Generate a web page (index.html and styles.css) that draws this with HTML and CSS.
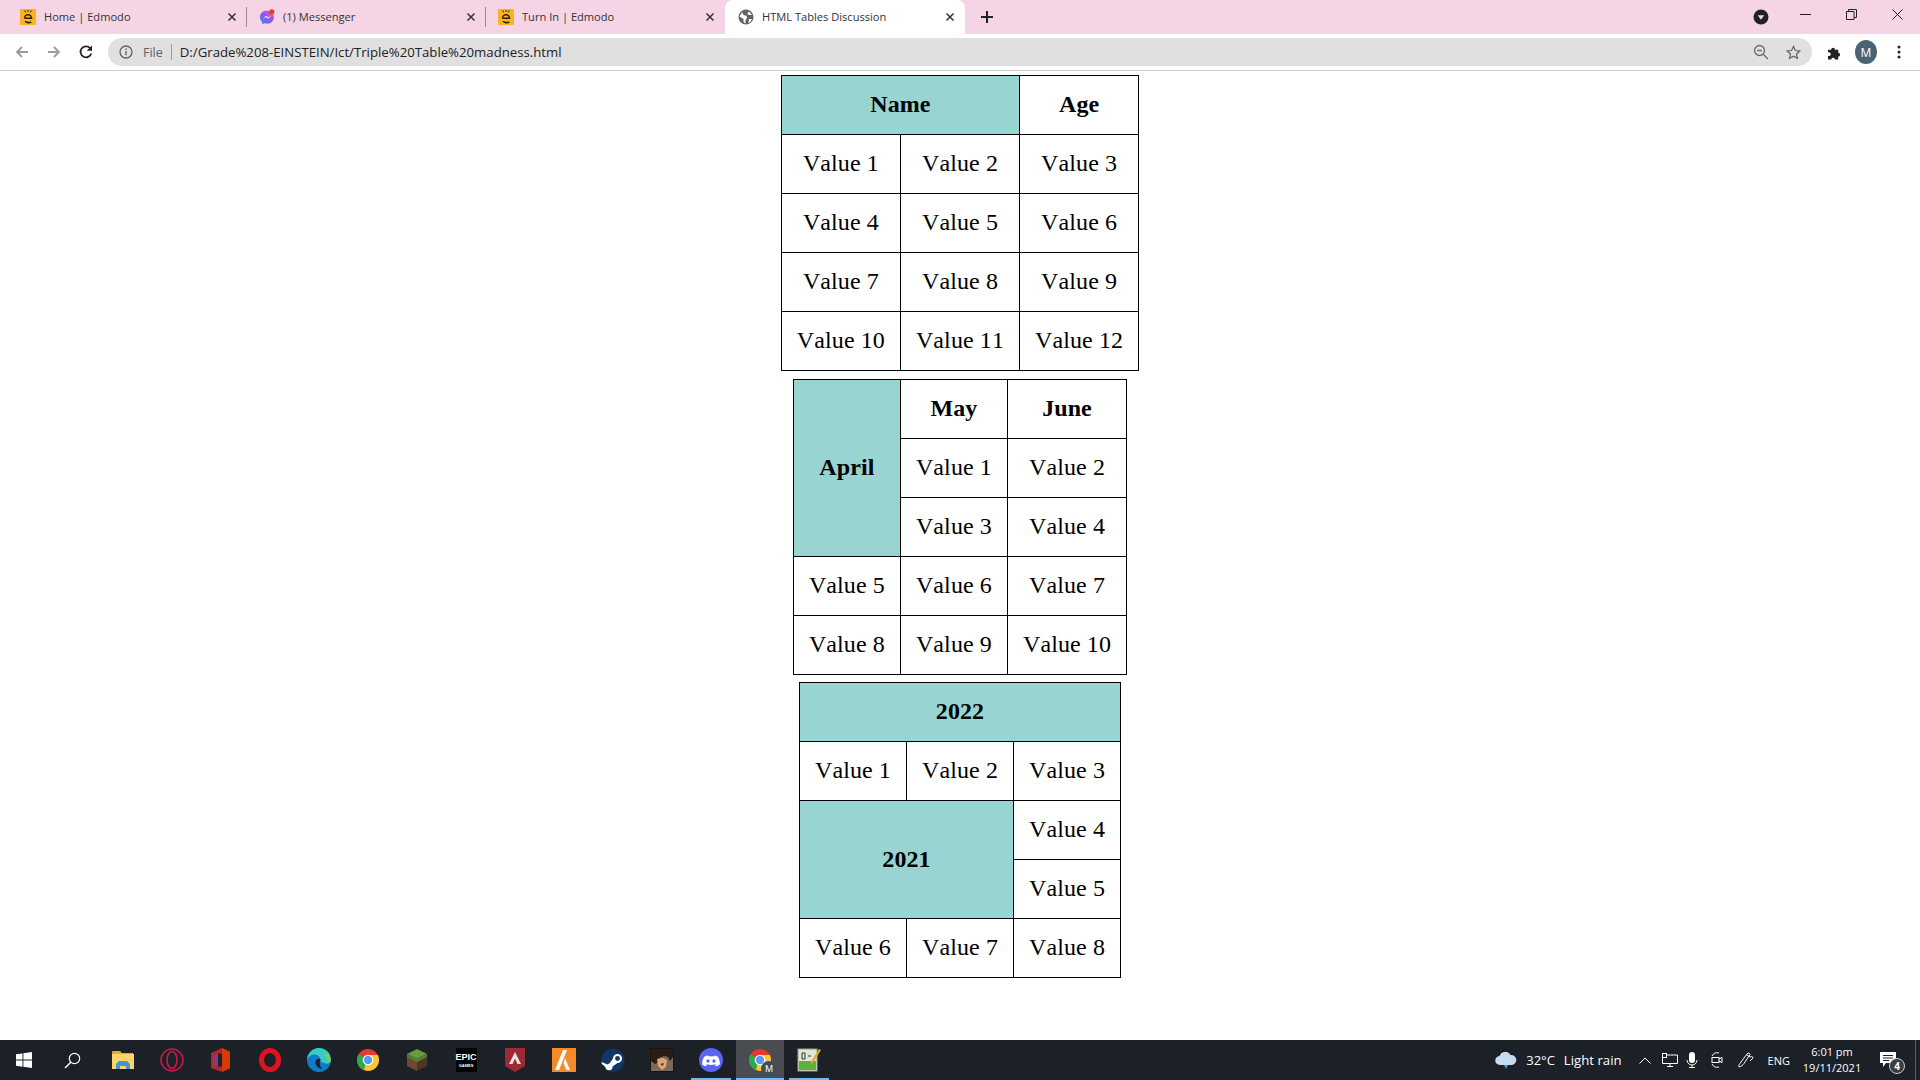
FILE: index.html
```html
<!DOCTYPE html>
<html lang="en">

<head>
    <meta charset="UTF-8">
    <meta name="viewport" content="width=device-width, initial-scale=1.0">
    <title>HTML Tables Discussion</title>
    <link rel="stylesheet" href="styles.css">
</head>

<body>

    <svg class="defs" width="0" height="0">
        <symbol id="edmodo" viewBox="0 0 16 16">
            <rect width="16" height="16" rx="1" fill="#fbb41a"/>
            <path d="M4.700 1.500l.9 1.700M8 .9v2.200M11.300 1.500l-.9 1.700" stroke="#3a3020" stroke-width="1.100" fill="none"/>
            <path d="M4.500 9.300a3.500 3.500 0 1 1 7 0H4.500M11.200 12.900c-1.700 1.200-5 1-6-.9" stroke="#2c2618" stroke-width="1.600" fill="none"/>
        </symbol>
        <symbol id="close" viewBox="0 0 10 10">
            <path d="M1.500 1.500l7 7M8.500 1.500l-7 7" stroke="#333" stroke-width="1.500" fill="none"/>
        </symbol>
        <symbol id="chrome-logo" viewBox="0 0 24 24">
            <circle cx="12" cy="12" r="11" fill="#e33b2e"/>
            <path d="M12 12L2.500 6.500A11 11 0 0 0 8 22.300z" fill="#2da94f"/>
            <path d="M12 7h9.800A11 11 0 0 1 12 23l-4-1z" fill="#fcc934"/>
            <circle cx="12" cy="12" r="5.300" fill="#fff"/>
            <circle cx="12" cy="12" r="4.200" fill="#5e97f6"/>
        </symbol>
    </svg>

    <header class="tab-strip">
        <div class="tab">
            <svg class="favicon"><use href="#edmodo"/></svg>
            <span class="tab-title">Home | Edmodo</span>
            <svg class="tab-close"><use href="#close"/></svg>
        </div>
        <div class="tab with-sep">
            <svg class="favicon" viewBox="0 0 16 16">
                <defs>
                    <linearGradient id="msgr" x1="0" y1="1" x2="1" y2="0">
                        <stop offset="0" stop-color="#2f8cf5"/>
                        <stop offset="0.5" stop-color="#8f55f2"/>
                        <stop offset="1" stop-color="#f76a8c"/>
                    </linearGradient>
                </defs>
                <path d="M8 1.500C4 1.500 1 4.400 1 8.200c0 2 .8 3.700 2.200 4.900V15.500l2.200-1.200c.8.300 1.700.4 2.600.4 4 0 7-2.900 7-6.500S12 1.500 8 1.500z" fill="url(#msgr)"/>
                <path d="M4 10l3-3.300 2 1.700 3-1.900-3 3.300-2-1.700z" fill="#fff"/>
                <circle cx="12.800" cy="2.800" r="2.600" fill="#f0392f"/>
            </svg>
            <span class="tab-title">(1) Messenger</span>
            <svg class="tab-close"><use href="#close"/></svg>
        </div>
        <div class="tab with-sep">
            <svg class="favicon"><use href="#edmodo"/></svg>
            <span class="tab-title">Turn In | Edmodo</span>
            <svg class="tab-close"><use href="#close"/></svg>
        </div>
        <div class="tab active">
            <svg class="favicon" viewBox="0 0 16 16">
                <circle cx="8" cy="8" r="7.500" fill="#5f6368"/>
                <path d="M5 1.500L4.200 4 6 6.200l2.500.6L9 9l-1.500 2v3.500l-2-1.500V10L1.500 7.500zM11 2.500l-1.500 1.700 1 1.800H14zM11 10h3l-2 3.500-1.500.5z" fill="#fff"/>
            </svg>
            <span class="tab-title">HTML Tables Discussion</span>
            <svg class="tab-close"><use href="#close"/></svg>
        </div>
        <svg class="new-tab" width="14" height="14" viewBox="0 0 14 14">
            <path d="M7 1v12M1 7h12" stroke="#222" stroke-width="2" fill="none"/>
        </svg>
        <div class="strip-right">
            <svg class="tab-search" width="16" height="16" viewBox="0 0 16 16">
                <circle cx="8" cy="8" r="7.500" fill="#202124"/>
                <path d="M4.800 6.300h6.400L8 10.800z" fill="#f5d5e5"/>
            </svg>
            <svg class="win-btn win-min" width="11" height="11" viewBox="0 0 11 11">
                <path d="M0 5.500h11" stroke="#222" fill="none"/>
            </svg>
            <svg class="win-btn win-restore" width="11" height="11" viewBox="0 0 11 11">
                <path d="M.5 2.500h7.500v8H.5zM2.500 2.500V.5h8v8H8" stroke="#222" fill="none"/>
            </svg>
            <svg class="win-btn win-close" width="11" height="11" viewBox="0 0 11 11">
                <path d="M.5.500l10 10M10.500.500l-10 10" stroke="#222" fill="none"/>
            </svg>
        </div>
    </header>

    <nav class="toolbar">
        <svg class="nav-icon" viewBox="0 0 16 16">
            <path d="M14 8H3M8 3L3 8l5 5" stroke="#9a9b9d" stroke-width="1.800" fill="none"/>
        </svg>
        <svg class="nav-icon" viewBox="0 0 16 16">
            <path d="M2 8h11M8 3l5 5-5 5" stroke="#9a9b9d" stroke-width="1.800" fill="none"/>
        </svg>
        <svg class="nav-icon" viewBox="0 0 16 16">
            <path d="M13.300 9.500A5.500 5.500 0 1 1 12 4" stroke="#222" stroke-width="1.800" fill="none"/>
            <path d="M14 1.500v5.200H8.800z" fill="#222"/>
        </svg>
        <div class="omnibox">
            <svg class="info-icon" width="14" height="14" viewBox="0 0 14 14">
                <circle cx="7" cy="7" r="6" stroke="#5f6368" stroke-width="1.300" fill="none"/>
                <path d="M7 6v4.200M7 3.500v1.400" stroke="#5f6368" stroke-width="1.400" fill="none"/>
            </svg>
            <span class="scheme">File</span>
            <span class="url-sep"></span>
            <span class="url">D:/Grade%208-EINSTEIN/Ict/Triple%20Table%20madness.html</span>
            <svg class="zoom-icon" width="16" height="16" viewBox="0 0 16 16">
                <circle cx="6.500" cy="6.500" r="5" stroke="#6a6b6d" stroke-width="1.300" fill="none"/>
                <path d="M4.200 6.500h4.600M10.200 10.200L15 15" stroke="#6a6b6d" stroke-width="1.300" fill="none"/>
            </svg>
            <svg class="star-icon" width="15" height="15" viewBox="0 0 16 16">
                <path d="M8 1.500l2 4.400 4.700.5-3.500 3.200 1 4.700L8 12l-4.200 2.300 1-4.700-3.500-3.200 4.700-.5z" stroke="#5f6368" stroke-width="1.300" fill="none"/>
            </svg>
        </div>
        <svg class="puzzle" width="15" height="15" viewBox="0 0 16 16">
            <path d="M1 5h3.500a2 2 0 1 1 4 0H12v3.300a2 2 0 1 1 0 4V15.500H8.500a2 2 0 1 0-4 0H1v-4a2 2 0 1 0 0-3.500z" fill="#222"/>
        </svg>
        <span class="avatar">M</span>
        <svg class="kebab" width="4" height="14" viewBox="0 0 4 14">
            <circle cx="2" cy="2" r="1.500" fill="#222"/>
            <circle cx="2" cy="7" r="1.500" fill="#222"/>
            <circle cx="2" cy="12" r="1.500" fill="#222"/>
        </svg>
    </nav>

    <main class="page">
        <table>
            <tr>
                <th colspan="2" class="teal">Name</th>
                <th>Age</th>
            </tr>
            <tr><td>Value 1</td><td>Value 2</td><td>Value 3</td></tr>
            <tr><td>Value 4</td><td>Value 5</td><td>Value 6</td></tr>
            <tr><td>Value 7</td><td>Value 8</td><td>Value 9</td></tr>
            <tr><td>Value 10</td><td>Value 11</td><td>Value 12</td></tr>
        </table>

        <table>
            <tr>
                <th rowspan="3" class="teal">April</th>
                <th>May</th>
                <th>June</th>
            </tr>
            <tr><td>Value 1</td><td>Value 2</td></tr>
            <tr><td>Value 3</td><td>Value 4</td></tr>
            <tr><td>Value 5</td><td>Value 6</td><td>Value 7</td></tr>
            <tr><td>Value 8</td><td>Value 9</td><td>Value 10</td></tr>
        </table>

        <table class="last-table">
            <tr><th colspan="3" class="teal">2022</th></tr>
            <tr><td>Value 1</td><td>Value 2</td><td>Value 3</td></tr>
            <tr>
                <th colspan="2" rowspan="2" class="teal">2021</th>
                <td>Value 4</td>
            </tr>
            <tr><td>Value 5</td></tr>
            <tr><td>Value 6</td><td>Value 7</td><td>Value 8</td></tr>
        </table>
    </main>

    <footer class="taskbar">
        <div class="slot start">
            <svg width="16" height="16" viewBox="0 0 16 16">
                <path d="M0 2.300l6.500-.9v6.200H0zM7.400 1.300L16 0v7.600H7.400zM0 8.500h6.500v6.200L0 13.800zM7.400 8.500H16V16l-8.600-1.200z" fill="#fff"/>
            </svg>
        </div>
        <div class="slot start">
            <svg width="17" height="17" viewBox="0 0 17 17">
                <circle cx="10.500" cy="6.500" r="5.200" stroke="#fff" stroke-width="1.200" fill="none"/>
                <path d="M6.800 10.200L1 16" stroke="#fff" stroke-width="1.500" fill="none"/>
            </svg>
        </div>
        <div class="slot folder-slot">
            <svg width="22" height="20" viewBox="0 0 22 20">
                <path d="M0 2a1 1 0 0 1 1-1h7l2 2h11v3H0z" fill="#e2a92f"/>
                <rect y="4" width="22" height="15" fill="#fbd667"/>
                <path d="M4 19v-5l3-3h8l3 3v5h-4v-3H8v3z" fill="#3d97d8"/>
            </svg>
        </div>
        <div class="slot">
            <svg width="24" height="24" viewBox="0 0 24 24">
                <circle cx="12" cy="12" r="11" stroke="#c9184a" stroke-width="1.600" fill="none"/>
                <ellipse cx="12" cy="12" rx="5" ry="8.500" stroke="#c9184a" stroke-width="1.600" fill="none"/>
            </svg>
        </div>
        <div class="slot">
            <svg width="20" height="24" viewBox="0 0 20 24">
                <path d="M0 5l11-5v24L0 20z" fill="#b3262c"/>
                <path d="M2 7.500l5-2v13l-5-1z" fill="#8c3a77"/>
                <path d="M11 0l8 3.500v17L11 24z" fill="#d83b01"/>
                <path d="M7 5.500h4v13H7z" fill="#1f2229"/>
            </svg>
        </div>
        <div class="slot">
            <svg width="24" height="24" viewBox="0 0 24 24">
                <ellipse cx="12" cy="12" rx="8.500" ry="9.500" stroke="#e0121f" stroke-width="5" fill="none"/>
            </svg>
        </div>
        <div class="slot">
            <svg width="24" height="24" viewBox="0 0 24 24">
                <circle cx="12" cy="12" r="12" fill="#0c7ccb"/>
                <path d="M0 12a12 12 0 0 1 23-4.800c1.500 4-1 7.800-5 7.800-3 0-4.500-1.500-4.500-3 0-3-3-5.500-6-5.500C4 6.500 1 9 0 12z" fill="#3bc9c4"/>
                <path d="M20 5a12 12 0 0 1 4 7c0 3-3 4-6 3.500 3-1.500 3.500-6-1-8z" fill="#6fd35b"/>
                <path d="M13.500 11c-2-1-5 0-5 3.500 0 3 3 6 7 6.500-1-.5-4-3.500-2-10z" fill="#1f2229"/>
            </svg>
        </div>
        <div class="slot">
            <svg width="24" height="24"><use href="#chrome-logo"/></svg>
        </div>
        <div class="slot">
            <svg width="22" height="24" viewBox="0 0 22 24">
                <path d="M11 1l10 5-10 5L1 6z" fill="#6b9a3d"/>
                <path d="M1 6l10 5v12L1 18z" fill="#6b4a30"/>
                <path d="M21 6l-10 5v12l10-5z" fill="#4f3523"/>
                <path d="M1 6l10 5 10-5v3l-10 5L1 9z" fill="#558030"/>
            </svg>
        </div>
        <div class="slot">
            <div class="epic">
                <span>EPIC</span>
                <span class="epic-sub">GAMES</span>
            </div>
        </div>
        <div class="slot">
            <svg width="20" height="24" viewBox="0 0 20 24">
                <path d="M0 0h20v18l-10 6-10-6z" fill="#9c2a34"/>
                <path d="M10 4l6 12h-3.500L10 10.500 7.500 16H4z" fill="#e9e2e2"/>
            </svg>
        </div>
        <div class="slot">
            <svg width="24" height="24" viewBox="0 0 24 24">
                <rect width="24" height="24" fill="#f58a2a"/>
                <path d="M11 2h4l-8 20H3zM13 10l5 12h-3.500l-3-7z" fill="#fff"/>
            </svg>
        </div>
        <div class="slot">
            <svg width="24" height="24" viewBox="0 0 24 24">
                <circle cx="12" cy="12" r="11.500" fill="#12366a"/>
                <path d="M.5 14l6 2.500a3 3 0 0 1 2-1l3.500-5a4.500 4.500 0 1 1 4.500 4.500l-5 3.500a3.500 3.500 0 0 1-7 .5L.8 16z" fill="#fff"/>
                <circle cx="16.500" cy="10.500" r="2.400" fill="#12366a"/>
            </svg>
        </div>
        <div class="slot">
            <svg width="24" height="24" viewBox="0 0 24 24">
                <rect width="24" height="24" fill="#181410"/>
                <rect x="1" y="1" width="22" height="22" fill="#7a6a58"/>
                <path d="M1 1h22v8l-3 4-2-4-4-1-5 2-2 5-2 1-4-3z" fill="#2a1c14"/>
                <path d="M7 11l6-1 4 2-1 7-4 3-4-4z" fill="#d9a67a"/>
                <path d="M10 16l4-1-1 3z" fill="#7c2a20"/>
            </svg>
        </div>
        <div class="slot running">
            <svg width="24" height="24" viewBox="0 0 24 24">
                <circle cx="12" cy="12" r="12" fill="#5865f2"/>
                <path d="M8.500 7.500c-1.300.2-2.400.6-3.300 1.200-1.700 2.700-2.200 5.300-2 7.800 1.300 1 2.700 1.500 3.900 1.800l.9-1.300-1.300-.7.300-.3c2.700 1.200 7.300 1.200 10 0l.3.3-1.300.7.900 1.300c1.200-.3 2.600-.8 3.900-1.800.3-2.900-.5-5.400-2-7.800-.9-.6-2-1-3.300-1.200l-.5.900c-1.500-.2-2.300-.2-3.800 0z" fill="#fff"/>
                <ellipse cx="9" cy="13" rx="1.600" ry="1.800" fill="#5865f2"/>
                <ellipse cx="15" cy="13" rx="1.600" ry="1.800" fill="#5865f2"/>
            </svg>
        </div>
        <div class="slot running active-app">
            <div class="chrome-stack">
                <svg width="24" height="24"><use href="#chrome-logo"/></svg>
                <span class="badge-m">M</span>
            </div>
        </div>
        <div class="slot running">
            <svg width="24" height="24" viewBox="0 0 24 24">
                <rect x="1" y="1" width="19" height="22" fill="#dfe8d2" stroke="#9aa08f"/>
                <rect x="2" y="13" width="17" height="9" fill="#57b33e"/>
                <path d="M5 5v6M8 5v6M5 5h3M5 11h3M11 8h3" stroke="#333" fill="none"/>
                <path d="M22 1l2 1-8 13-2 1 .2-2.500z" fill="#e8a12a"/>
            </svg>
        </div>

        <div class="tray">
            <svg class="cloud" width="22" height="17" viewBox="0 0 22 17">
                <path d="M5 13a4.500 4.500 0 0 1-.5-9A6 6 0 0 1 15.500 3 5 5 0 0 1 17 13z" fill="#c7dcf0"/>
                <path d="M9 13h4l-2 4z" fill="#3f9be0"/>
            </svg>
            <span class="temp">32°C</span>
            <span class="weather">Light rain</span>
            <svg class="tray-chevron" width="12" height="7" viewBox="0 0 12 7">
                <path d="M.5 6.500L6 1l5.500 5.500" stroke="#fff" fill="none"/>
            </svg>
            <svg class="tray-net" width="16" height="14" viewBox="0 0 16 14">
                <path d="M5 2h10.500v8.500H.5V5M8 10.500v3M5 13.500h6" stroke="#fff" fill="none"/>
                <rect x=".5" y=".5" width="4" height="4" stroke="#fff" fill="none"/>
            </svg>
            <svg class="tray-mic" width="12" height="16" viewBox="0 0 12 16">
                <rect x="3" y="0" width="6" height="11" rx="3" fill="#fff"/>
                <path d="M1 8a5 5 0 0 0 10 0M6 13v2.500M3 15.500h6" stroke="#fff" fill="none"/>
            </svg>
            <svg class="tray-meet" width="12" height="16" viewBox="0 0 12 16">
                <path d="M1 4a6 6 0 0 1 7-3M1 12a6 6 0 0 0 7 3" stroke="#fff" fill="none"/>
                <rect x="1" y="5.500" width="7" height="5" stroke="#fff" fill="none"/>
                <path d="M8 7l3-1.500v5L8 9" stroke="#fff" fill="none"/>
            </svg>
            <svg class="tray-pen" width="16" height="16" viewBox="0 0 16 16">
                <path d="M1 15c-1-2 1-3 2-5l6-8c1-1.500 3-1 3 .5l-6 9c-1 1.500-3 3-5 3.500zM9 3l3 2M12 5c2-1 3 0 3 1l-3 3" stroke="#fff" fill="none"/>
            </svg>
            <span class="lang">ENG</span>
            <div class="clock">
                <span>6:01 pm</span>
                <span>19/11/2021</span>
            </div>
            <div class="notif">
                <svg width="17" height="16" viewBox="0 0 17 16">
                    <path d="M0 0h16v11H6l-3 4v-4H0z" fill="#fff"/>
                    <path d="M3 3.500h10M3 6h10M3 8.500h6" stroke="#1c2027"/>
                </svg>
                <span class="notif-count">4</span>
            </div>
            <span class="show-desktop"></span>
        </div>
    </footer>

</body>

</html>
```
FILE: styles.css
```css
* {
    box-sizing: border-box;
}

html,
body {
    height: 100%;
}

body {
    display: flex;
    flex-direction: column;
    height: 100vh;
    margin: 0;
    overflow: hidden;
    background: #ffffff;
    font-family: 'Open Sans', 'Noto Sans', sans-serif;
    color: #202124;
}

.defs {
    position: absolute;
}

/* tab strip */

.tab-strip {
    display: flex;
    align-items: stretch;
    flex: 0 0 34px;
    padding-left: 8px;
    background: #f5d5e5;
}

.tab {
    position: relative;
    display: flex;
    align-items: center;
    width: 239px;
    padding-left: 12px;
    font-size: 12px;
}

.with-sep::before {
    content: '';
    position: absolute;
    left: -1px;
    top: 7px;
    bottom: 7px;
    width: 1px;
    background: #9a8a92;
}

.tab.active {
    width: 240px;
    padding-left: 13px;
    background: #ffffff;
    border-radius: 8px 8px 0 0;
}

.favicon {
    flex: 0 0 16px;
    width: 16px;
    height: 16px;
    margin-right: 8px;
}

.tab-title {
    flex: 1;
    margin-top: -2px;
    font-size: 11.100px;
    color: #333333;
    white-space: nowrap;
}

.tab-close {
    flex: 0 0 10px;
    width: 10px;
    height: 10px;
    margin-right: 10px;
}

.new-tab {
    align-self: center;
    margin-left: 15px;
}

.strip-right {
    display: flex;
    align-items: flex-start;
    margin-left: auto;
}

.tab-search {
    margin-top: 9px;
    margin-right: 31px;
}

.win-btn {
    margin-top: 9px;
}

.win-restore {
    margin-left: 35px;
}

.win-close {
    margin-left: 35px;
    margin-right: 17px;
}

/* toolbar */

.toolbar {
    display: flex;
    align-items: center;
    flex: 0 0 37px;
    padding-left: 14px;
    border-bottom: 1px solid #cfcfcf;
}

.nav-icon {
    flex: 0 0 16px;
    width: 16px;
    height: 16px;
    margin-right: 16px;
}

.omnibox {
    display: flex;
    align-items: center;
    flex: 0 0 1704px;
    height: 28px;
    margin-left: -2px;
    padding-left: 11px;
    padding-right: 11px;
    background: #e0e0e0;
    border-radius: 14px;
}

.info-icon {
    margin-right: 10px;
}

.scheme {
    color: #5f6368;
    font-size: 12.500px;
}

.url-sep {
    width: 1px;
    height: 16px;
    margin: 0 8px;
    background: #9a9a9a;
}

.url {
    flex: 1;
    font-size: 13.200px;
    color: #202124;
    white-space: nowrap;
}

.zoom-icon {
    margin-right: 17px;
}

.puzzle {
    flex: 0 0 15px;
    margin-left: 15px;
}

.avatar {
    display: flex;
    align-items: center;
    justify-content: center;
    flex: 0 0 22px;
    height: 24px;
    margin-left: 13px;
    background: #4a6374;
    border-radius: 50%;
    color: #ffffff;
    font-size: 12px;
}

.kebab {
    flex: 0 0 4px;
    margin-left: 20px;
}

/* tables */

.page {
    display: flex;
    flex: 1;
    flex-direction: column;
    align-items: center;
    gap: 8px;
    padding-top: 4px;
    font-family: 'Liberation Serif', serif;
}

table {
    border-collapse: collapse;
    font-size: 24px;
    line-height: 28px;
    letter-spacing: 0.1px;
    font-kerning: none;
    color: #000000;
}

.last-table {
    margin-top: -1px;
}

th,
td {
    padding: 14px 15px 16px;
    border: 1px solid #000000;
    text-align: center;
}

.teal {
    background: #98d4d2;
}

/* taskbar */

.taskbar {
    position: relative;
    display: flex;
    flex: 0 0 40px;
    padding-left: 0;
    background: #1c2027;
    color: #ffffff;
}

.slot {
    position: relative;
    display: flex;
    align-items: center;
    justify-content: center;
    flex: 0 0 48px;
    width: 48px;
    margin-right: 1px;
}

.slot.start {
    margin-right: 0;
}

.folder-slot {
    margin-left: 3px;
}

.running::after {
    content: '';
    position: absolute;
    left: 4px;
    right: 4px;
    bottom: 0;
    height: 2px;
    background: #76b9ed;
}

.active-app {
    background: #4a4c52;
}

.active-app::after {
    left: 0;
    right: 0;
}

.epic {
    display: flex;
    flex-direction: column;
    align-items: center;
    justify-content: center;
    width: 21px;
    height: 24px;
    background: #000000;
    font-family: 'Liberation Sans', sans-serif;
    font-size: 9px;
    font-weight: bold;
    line-height: 11px;
    color: #ffffff;
}

.epic-sub {
    font-size: 4px;
    line-height: 6px;
}

.chrome-stack {
    position: relative;
    width: 24px;
    height: 24px;
}

.badge-m {
    position: absolute;
    right: -5px;
    bottom: -5px;
    width: 16px;
    height: 16px;
    background: #3c4f5c;
    border-radius: 50%;
    font-size: 9px;
    line-height: 16px;
    text-align: center;
}

.tray {
    display: flex;
    align-items: center;
    margin-left: auto;
    font-size: 13px;
}

.temp {
    margin-left: 9px;
}

.weather {
    margin-left: 9px;
    font-size: 13.200px;
}

.tray-chevron {
    margin-left: 17px;
}

.tray-net {
    margin-left: 11px;
}

.tray-mic {
    margin-left: 8px;
}

.tray-meet {
    margin-left: 13px;
}

.tray-pen {
    margin-left: 15px;
}

.lang {
    margin-left: 14px;
    font-size: 11px;
}

.clock {
    display: flex;
    flex-direction: column;
    align-items: center;
    width: 58px;
    margin-left: 13px;
    font-size: 11px;
    line-height: 16px;
}

.notif {
    position: relative;
    display: flex;
    margin-left: 19px;
}

.notif-count {
    position: absolute;
    right: -8px;
    bottom: -6px;
    width: 16px;
    height: 16px;
    background: #3a3d42;
    border: 1px solid #cccccc;
    border-radius: 50%;
    font-size: 10px;
    font-weight: bold;
    line-height: 14px;
    text-align: center;
}

.show-desktop {
    width: 1px;
    height: 40px;
    margin-left: 18px;
    margin-right: 4px;
    background: #5a5d62;
}
```
